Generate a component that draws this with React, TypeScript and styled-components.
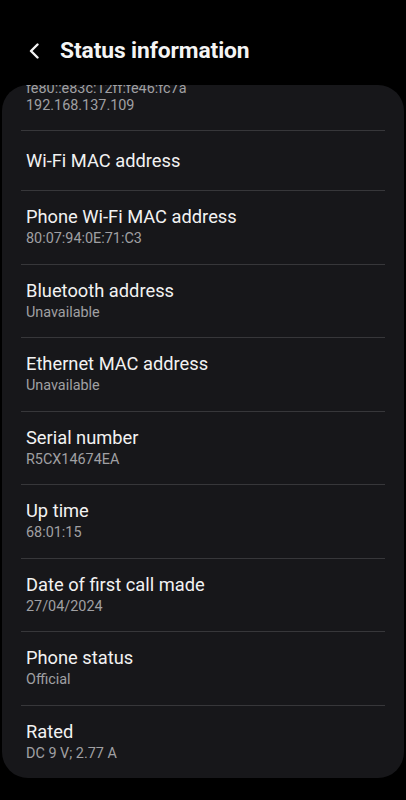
import styled, { createGlobalStyle } from "styled-components";

const GlobalStyle = createGlobalStyle`
  html, body {
    margin: 0;
    padding: 0;
    background: #000;
  }
  body {
    font-family: Roboto, "Noto Sans", sans-serif;
    -webkit-font-smoothing: antialiased;
  }
`;

const Screen = styled.div`
  width: 406px;
  height: 800px;
  background: #000;
  display: flex;
  flex-direction: column;
  overflow: hidden;
`;

const Header = styled.header`
  display: flex;
  align-items: center;
  height: 85px;
  padding: 16px 0 0 26px;
  gap: 18px;
  box-sizing: border-box;
`;

const BackButton = styled.button`
  background: none;
  border: none;
  padding: 0;
  width: 16px;
  height: 20px;
  display: flex;
  align-items: center;
  justify-content: center;
`;

const Title = styled.h1`
  margin: 0;
  color: #f4f4f4;
  font-size: 22.8px;
  font-weight: 700;
  letter-spacing: -0.1px;
`;

const Card = styled.section`
  margin: 0 2px;
  height: 693px;
  background: #17171a;
  border-radius: 26px;
  overflow: hidden;
`;

const List = styled.div`
  margin-top: -44.5px;
`;

const Row = styled.div<{ $single?: boolean }>`
  padding: ${(p) => (p.$single ? "18.5px 24px" : "15px 24px 16.5px")};
`;

const Divider = styled.hr`
  margin: 0 19px;
  border: none;
  height: 1px;
  background: #37373a;
`;

const Label = styled.div`
  color: #f2f2f2;
  font-size: 18.3px;
  line-height: 22px;
`;

const Value = styled.div`
  color: #a0a0a3;
  font-size: 14.4px;
  line-height: 17px;
  margin-top: 2px;
  & + & {
    margin-top: 0;
  }
`;

type Item = { label: string; values?: string[] };

const items: Item[] = [
  { label: "IP address", values: ["fe80::e83c:12ff:fe46:fc7a", "192.168.137.109"] },
  { label: "Wi-Fi MAC address" },
  { label: "Phone Wi-Fi MAC address", values: ["80:07:94:0E:71:C3"] },
  { label: "Bluetooth address", values: ["Unavailable"] },
  { label: "Ethernet MAC address", values: ["Unavailable"] },
  { label: "Serial number", values: ["R5CX14674EA"] },
  { label: "Up time", values: ["68:01:15"] },
  { label: "Date of first call made", values: ["27/04/2024"] },
  { label: "Phone status", values: ["Official"] },
  { label: "Rated", values: ["DC 9 V; 2.77 A"] },
];

export default function App() {
  return (
    <>
      <GlobalStyle />
      <Screen>
        <Header>
          <BackButton aria-label="Back">
            <svg width="12" height="16" viewBox="0 0 12 16">
              <path
                d="M9.5 1.5 L3 8 L9.5 14.5"
                fill="none"
                stroke="#f4f4f4"
                strokeWidth="2.4"
                strokeLinecap="round"
                strokeLinejoin="round"
              />
            </svg>
          </BackButton>
          <Title>Status information</Title>
        </Header>
        <Card>
          <List>
            {items.map((it, i) => (
              <div key={it.label}>
                {i > 0 && <Divider />}
                <Row $single={!it.values}>
                  <Label>{it.label}</Label>
                  {it.values?.map((v) => (
                    <Value key={v}>{v}</Value>
                  ))}
                </Row>
              </div>
            ))}
          </List>
        </Card>
      </Screen>
    </>
  );
}
